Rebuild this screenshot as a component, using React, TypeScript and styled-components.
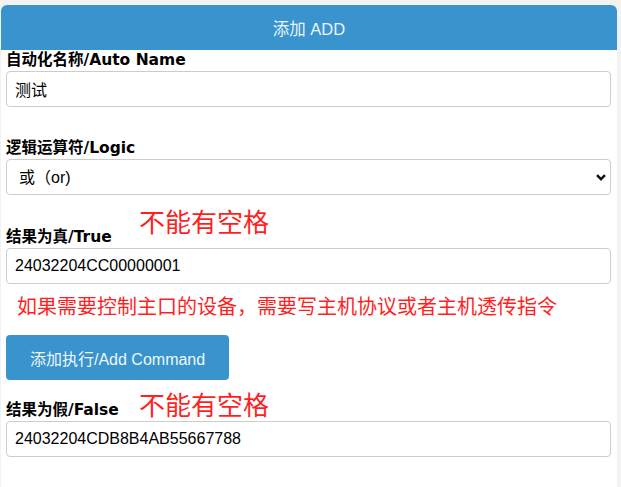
import React from "react";
import styled, { createGlobalStyle } from "styled-components";

const GlobalStyle = createGlobalStyle`
  html, body {
    margin: 0;
    padding: 0;
    background: #f2f2f2;
  }
  * {
    box-sizing: border-box;
  }
`;

const cjk = `"Noto Sans CJK SC", sans-serif`;

const Card = styled.div`
  margin: 5px 4px 0 1px;
  min-height: 482px;
  background: #ffffff;
  border-radius: 6px 6px 0 0;
  overflow: hidden;
`;

const Header = styled.div`
  height: 45px;
  display: flex;
  align-items: center;
  justify-content: center;
  background: #3994ce;
  color: rgba(255, 255, 255, 0.92);
  font-family: "Liberation Sans", ${cjk};
  font-size: 16.5px;
`;

const Form = styled.div`
  display: flex;
  flex-direction: column;
  padding: 0 6px 0 5px;
`;

const Label = styled.label<{ $gap?: number }>`
  display: block;
  margin-top: ${(p) => p.$gap ?? 0}px;
  font-family: "DejaVu Sans", ${cjk};
  font-weight: 700;
  font-size: 15.5px;
  line-height: 21px;
  color: #000;
  white-space: nowrap;
`;

const LabelRow = styled.div<{ $gap: number; $height: number }>`
  display: grid;
  grid-template-columns: 133px auto;
  align-items: end;
  margin-top: ${(p) => p.$gap}px;
  height: ${(p) => p.$height}px;
`;

const Warning = styled.span<{ $top?: boolean }>`
  align-self: ${(p) => (p.$top ? "start" : "end")};
  color: #ff1f1f;
  font-family: "Liberation Sans", ${cjk};
  font-size: 26px;
  line-height: 30px;
`;

const Note = styled.div`
  margin: 10px 0 0 11px;
  color: #ff1f1f;
  font-family: "Liberation Sans", ${cjk};
  font-size: 20px;
  line-height: 26px;
`;

const fieldStyle = `
  width: 100%;
  height: 36px;
  border: 1px solid #cccccc;
  border-radius: 4px;
  background: #ffffff;
  color: #000;
  font-family: "Liberation Sans", ${cjk};
  font-size: 16px;
  outline: none;
`;

const Input = styled.input`
  ${fieldStyle}
  padding: 0 8px;
`;

const SelectWrap = styled.div`
  position: relative;
`;

const Select = styled.select`
  ${fieldStyle}
  appearance: none;
  padding: 0 30px 0 12px;
`;

const Chevron = styled.svg`
  position: absolute;
  right: 5px;
  top: 15px;
  pointer-events: none;
`;

const Button = styled.button`
  align-self: flex-start;
  margin-top: 15px;
  height: 45px;
  padding: 0 24px;
  border: none;
  border-radius: 4px;
  background: #3994ce;
  color: rgba(255, 255, 255, 0.95);
  font-family: "Liberation Sans", ${cjk};
  font-size: 16px;
  cursor: pointer;
`;

export default function App() {
  return (
    <>
      <GlobalStyle />
      <Card>
        <Header>添加 ADD</Header>
        <Form>
          <Label>自动化名称/Auto Name</Label>
          <Input defaultValue="测试" />

          <Label $gap={31}>逻辑运算符/Logic</Label>
          <SelectWrap>
            <Select defaultValue="or">
              <option value="or">或（or)</option>
              <option value="and">与（and)</option>
            </Select>
            <Chevron width="10" height="7" viewBox="0 0 10 7">
              <polyline
                points="1,1.2 5,5.2 9,1.2"
                fill="none"
                stroke="#111"
                strokeWidth="2.4"
              />
            </Chevron>
          </SelectWrap>

          <LabelRow $gap={13} $height={40}>
            <Label>结果为真/True</Label>
            <Warning $top>不能有空格</Warning>
          </LabelRow>
          <Input defaultValue="24032204CC00000001" />

          <Note>如果需要控制主口的设备，需要写主机协议或者主机透传指令</Note>

          <Button>添加执行/Add Command</Button>

          <LabelRow $gap={11} $height={30}>
            <Label>结果为假/False</Label>
            <Warning>不能有空格</Warning>
          </LabelRow>
          <Input defaultValue="24032204CDB8B4AB55667788" />
        </Form>
      </Card>
    </>
  );
}
